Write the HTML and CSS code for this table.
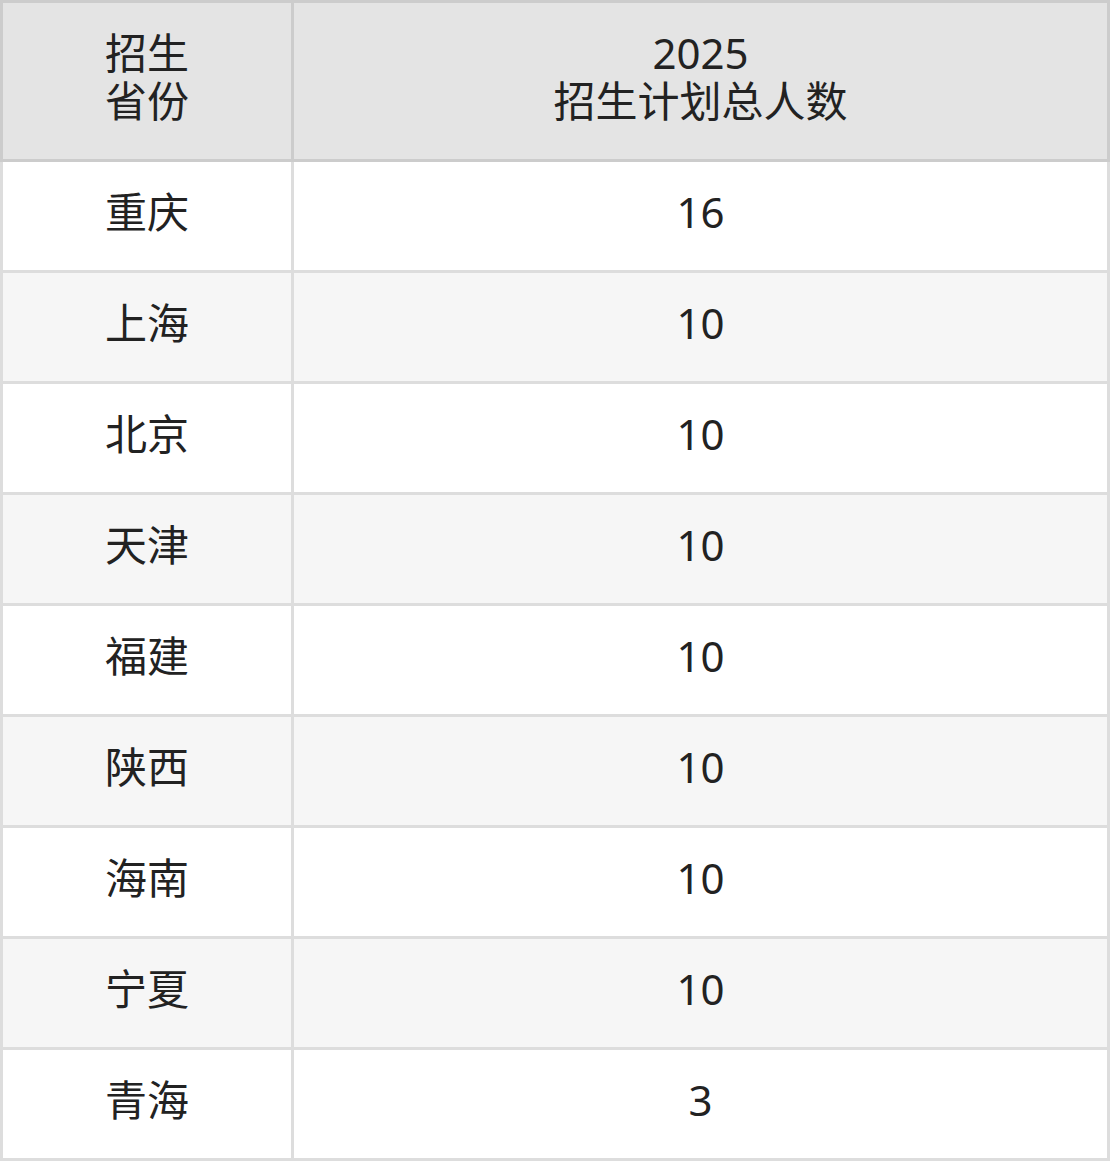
FILE: index.html
```html
<!DOCTYPE html>
<html lang="zh-CN">
<head>
<meta charset="utf-8">
<title>招生计划</title>
<link rel="stylesheet" href="styles.css">
</head>
<body>
<table class="plan">
  <thead>
    <tr>
      <th class="col-prov"><span class="line">招生</span><span class="line">省份</span></th>
      <th class="col-num"><span class="line">2025</span><span class="line">招生计划总人数</span></th>
    </tr>
  </thead>
  <tbody>
    <tr><td class="col-prov">重庆</td><td class="col-num">16</td></tr>
    <tr><td class="col-prov">上海</td><td class="col-num">10</td></tr>
    <tr><td class="col-prov">北京</td><td class="col-num">10</td></tr>
    <tr><td class="col-prov">天津</td><td class="col-num">10</td></tr>
    <tr><td class="col-prov">福建</td><td class="col-num">10</td></tr>
    <tr><td class="col-prov">陕西</td><td class="col-num">10</td></tr>
    <tr><td class="col-prov">海南</td><td class="col-num">10</td></tr>
    <tr><td class="col-prov">宁夏</td><td class="col-num">10</td></tr>
    <tr><td class="col-prov">青海</td><td class="col-num">3</td></tr>
  </tbody>
</table>
</body>
</html>
```
FILE: styles.css
```css
html, body {
  margin: 0;
  padding: 0;
  background: #ffffff;
}

.plan {
  width: 1110px;
  border-collapse: separate;
  border-spacing: 0;
  table-layout: fixed;
  font-family: "Noto Sans", "Noto Sans CJK SC", sans-serif;
  font-size: 42px;
  line-height: 48px;
  color: #222222;
}

.plan th,
.plan td {
  height: 48px;
  padding: 26px 0 34px;
  text-align: center;
  vertical-align: middle;
  font-weight: normal;
  border-right: 3px solid #dddddd;
  border-bottom: 3px solid #dddddd;
}

.plan .line {
  display: block;
  height: 48px;
  line-height: 48px;
}

.plan .col-prov {
  width: 288px;
  border-left: 3px solid #dddddd;
}

.plan th {
  background: #e4e4e4;
  border-top: 3px solid #cccccc;
  border-right-color: #cccccc;
  border-bottom-color: #cccccc;
}

.plan th.col-prov {
  border-left-color: #cccccc;
}

.plan tbody tr:nth-child(even) td {
  background: #f6f6f6;
}
```
